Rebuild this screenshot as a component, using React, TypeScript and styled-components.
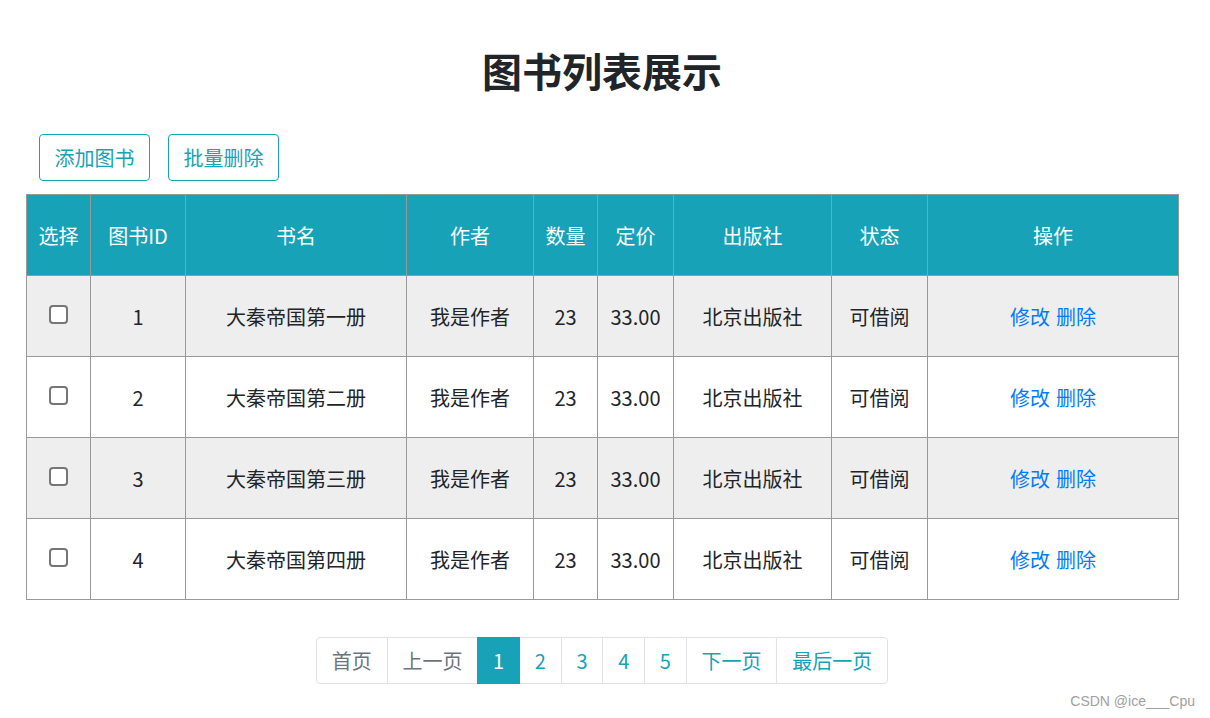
import styled, { createGlobalStyle } from 'styled-components';

const GlobalStyle = createGlobalStyle`
  body {
    margin: 0;
    background: #fff;
    font-family: "Noto Sans CJK SC", "Noto Sans", sans-serif;
    color: #212529;
  }
`;

const Page = styled.div`
  position: relative;
  width: 1210px;
  height: 718px;
  padding: 0 0 0 26px;
  box-sizing: border-box;
  overflow: hidden;
`;

const Title = styled.h1`
  margin: 0;
  padding-top: 42px;
  height: 88px;
  box-sizing: border-box;
  width: 1152px;
  text-align: center;
  font-size: 40px;
  line-height: 56px;
  font-weight: 700;
  color: #212529;
`;

const Toolbar = styled.div`
  display: flex;
  gap: 18px;
  padding-left: 13px;
  margin-top: 46px;
`;

const OutlineButton = styled.button`
  height: 47px;
  padding: 0 14.5px;
  border: 1px solid #17a2b8;
  border-radius: 4px;
  background: #fff;
  color: #17a2b8;
  font-family: inherit;
  font-size: 20px;
  line-height: 1;
`;

const Table = styled.table`
  margin-top: 13px;
  width: 1152px;
  border-collapse: collapse;
  table-layout: fixed;
  font-size: 20px;
`;

const Th = styled.th`
  height: 80px;
  padding: 0;
  background: #17a2b8;
  color: #fff;
  font-weight: 400;
  border: 1px solid #999;
  text-align: center;
`;

const Tr = styled.tr<{ $striped: boolean }>`
  background: ${(p) => (p.$striped ? '#eeeeee' : '#fff')};
`;

const Td = styled.td`
  height: 80px;
  padding: 0;
  border: 1px solid #999;
  text-align: center;
  color: #212529;
`;

const Check = styled.input`
  appearance: none;
  width: 19px;
  height: 19px;
  margin: 0 0 8px;
  border: 2px solid #767676;
  border-radius: 4px;
  background: #fff;
  box-sizing: border-box;
  vertical-align: middle;
`;

const Link = styled.a`
  color: #007bff;
  text-decoration: none;
  margin: 0 3px;
`;

const Pager = styled.ul`
  display: flex;
  justify-content: center;
  list-style: none;
  margin: 37px 0 0;
  padding: 0;
  width: 1152px;
`;

const PageItem = styled.li<{ $active?: boolean; $muted?: boolean }>`
  height: 47px;
  padding: 0 14.8px;
  display: flex;
  align-items: center;
  font-size: 20px;
  border: 1px solid #dee2e6;
  margin-left: -1px;
  background: ${(p) => (p.$active ? '#17a2b8' : '#fff')};
  border-color: ${(p) => (p.$active ? '#17a2b8' : '#dee2e6')};
  color: ${(p) => (p.$active ? '#fff' : p.$muted ? '#6c757d' : '#17a2b8')};
  box-sizing: border-box;
  position: relative;
  z-index: ${(p) => (p.$active ? 1 : 0)};
  &:first-child {
    border-radius: 4px 0 0 4px;
    margin-left: 0;
  }
  &:last-child {
    border-radius: 0 4px 4px 0;
  }
`;

const Watermark = styled.div`
  position: absolute;
  right: 15px;
  bottom: 9px;
  font-family: "Liberation Sans", Arial, sans-serif;
  font-size: 14px;
  color: #a0a0a0;
`;

const columns = [
  { label: '选择', width: 64 },
  { label: '图书ID', width: 95 },
  { label: '书名', width: 221 },
  { label: '作者', width: 127 },
  { label: '数量', width: 64 },
  { label: '定价', width: 76 },
  { label: '出版社', width: 158 },
  { label: '状态', width: 96 },
  { label: '操作', width: 251 },
];

const books = [
  { id: 1, name: '大秦帝国第一册' },
  { id: 2, name: '大秦帝国第二册' },
  { id: 3, name: '大秦帝国第三册' },
  { id: 4, name: '大秦帝国第四册' },
];

export default function App() {
  return (
    <Page>
      <GlobalStyle />
      <Title>图书列表展示</Title>
      <Toolbar>
        <OutlineButton>添加图书</OutlineButton>
        <OutlineButton>批量删除</OutlineButton>
      </Toolbar>
      <Table>
        <colgroup>
          {columns.map((c) => (
            <col key={c.label} style={{ width: c.width }} />
          ))}
        </colgroup>
        <thead>
          <tr>
            {columns.map((c) => (
              <Th key={c.label}>{c.label}</Th>
            ))}
          </tr>
        </thead>
        <tbody>
          {books.map((b, i) => (
            <Tr key={b.id} $striped={i % 2 === 0}>
              <Td>
                <Check type="checkbox" />
              </Td>
              <Td>{b.id}</Td>
              <Td>{b.name}</Td>
              <Td>我是作者</Td>
              <Td>23</Td>
              <Td>33.00</Td>
              <Td>北京出版社</Td>
              <Td>可借阅</Td>
              <Td>
                <Link>修改</Link>
                <Link>删除</Link>
              </Td>
            </Tr>
          ))}
        </tbody>
      </Table>
      <Pager>
        <PageItem $muted>首页</PageItem>
        <PageItem $muted>上一页</PageItem>
        <PageItem $active>1</PageItem>
        <PageItem>2</PageItem>
        <PageItem>3</PageItem>
        <PageItem>4</PageItem>
        <PageItem>5</PageItem>
        <PageItem>下一页</PageItem>
        <PageItem>最后一页</PageItem>
      </Pager>
      <Watermark>CSDN @ice___Cpu</Watermark>
    </Page>
  );
}
